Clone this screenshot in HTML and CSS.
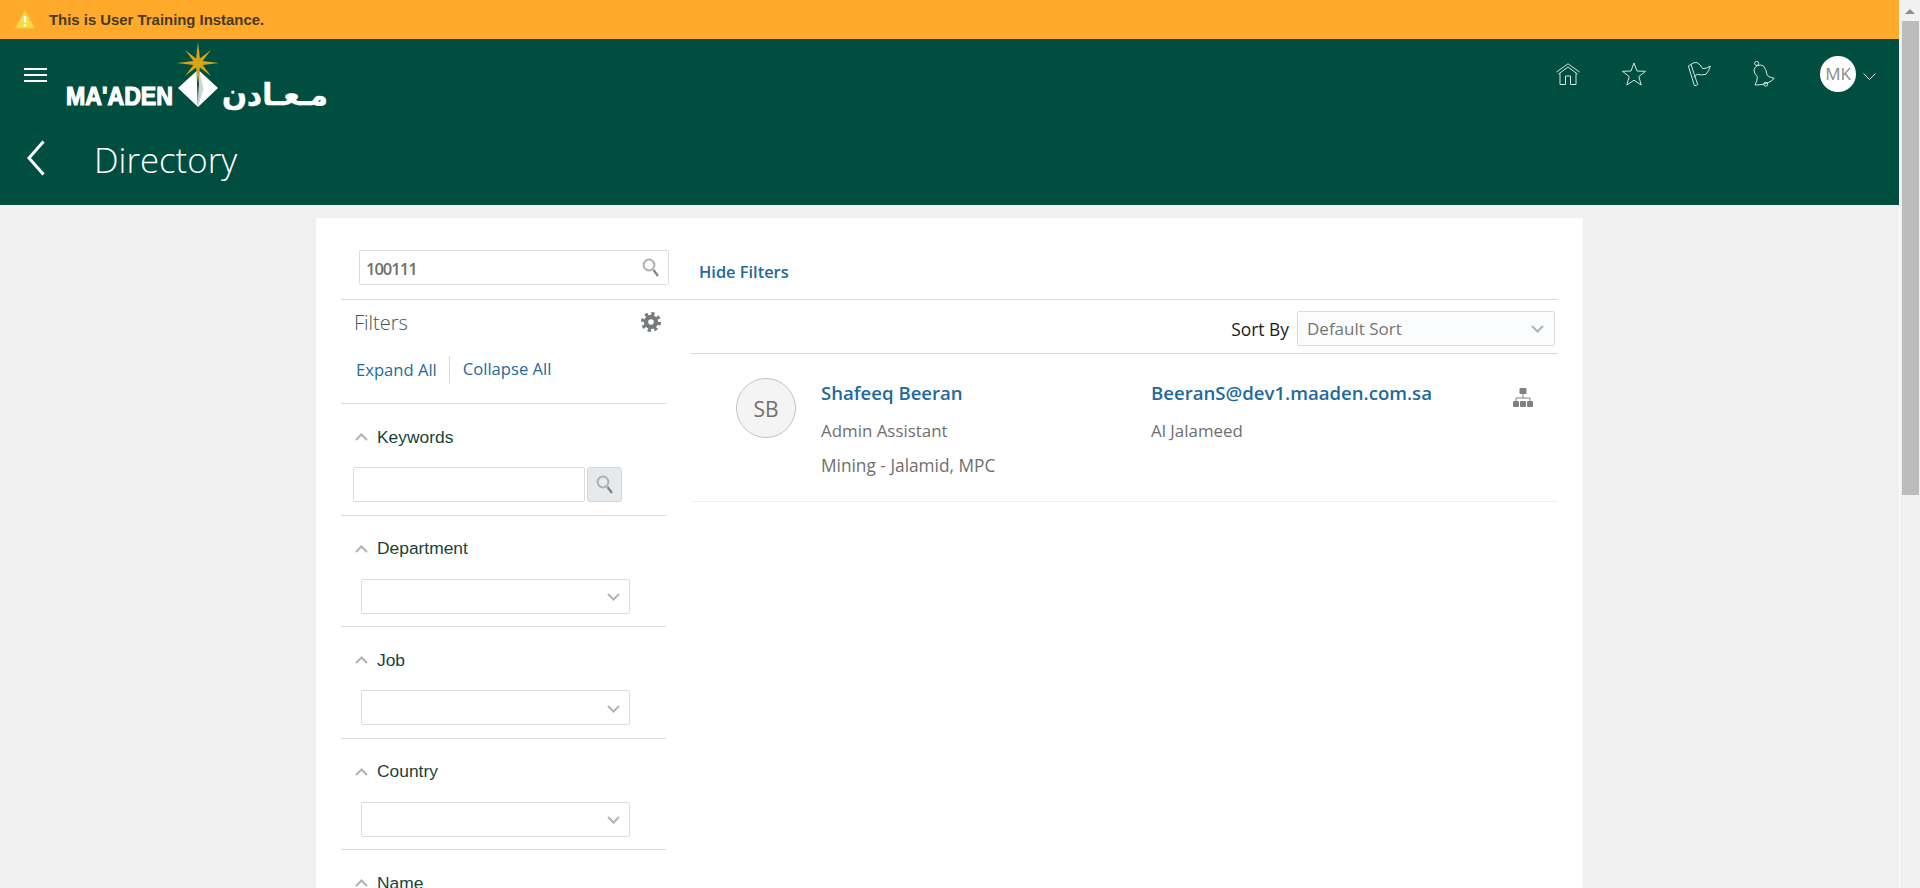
FILE: index.html
```html
<!DOCTYPE html>
<html>
<head>
<meta charset="utf-8" />
<title>Directory</title>
<link rel="stylesheet" href="styles.css">
</head>
<body>
<div class="page">
	<div class="main">
		<div class="banner">
			<svg class="warn" width="20" height="19" viewBox="0 0 20 19"><path d="M10 1 L19.5 18 H0.5 Z" fill="#f7dc3c" stroke="#e9c95a" stroke-width="1.2" stroke-linejoin="round"/><path d="M10 6 V12.5" stroke="#fff" stroke-width="2.4"/><circle cx="10" cy="15.2" r="1.3" fill="#fff"/></svg>
			<span>This is User Training Instance.</span>
		</div>
		<div class="header">
			<div class="top_row">
				<a class="menu" href="javascript:;"><i></i><i></i><i></i></a>
				<svg class="logo" width="275" height="70" viewBox="0 0 275 70">
					<polygon fill="#d9a415" points="138,0 139.9,16.4 151,8 142.6,19.1 159,21 142.6,22.9 151,34 139.9,25.6 138,42 136.1,25.6 125,34 133.4,22.9 117,21 133.4,19.1 125,8 136.1,16.4"/>
					<polygon fill="#fff" points="118,46 136.6,29 137.6,60 138,65"/>
					<polygon fill="#fff" points="139.6,29 158,46 138,65"/>
					<polygon fill="#c9d6d1" points="139.6,29 143.5,47 138,65"/>
					<text class="logo_en" x="6" y="63" textLength="107" lengthAdjust="spacingAndGlyphs">MA'ADEN</text>
					<text class="logo_ar" x="162" y="63" textLength="106" lengthAdjust="spacingAndGlyphs">مـعـادن</text>
				</svg>
				<div class="tools">
					<svg width="24" height="22" viewBox="0 0 24 22"><path d="M0.5 9 L12 0.8 L23.5 9 M2.5 11 L12 4 L21.5 11 M4 10.5 V21.5 H9.5 V13 H14.5 V21.5 H20 V10.5"/></svg>
					<svg width="24" height="24" viewBox="0 0 24 24"><path d="M12 1 L15 9 L23.5 9.3 L16.8 14.6 L19.2 23 L12 18.2 L4.8 23 L7.2 14.6 L0.5 9.3 L9 9 Z"/></svg>
					<svg width="23" height="24" viewBox="0 0 23 24"><path d="M0.4 4 L3 2.4 L9.7 22.6 Q8.4 24 6.3 23.4 Z M3 2.4 Q6 -0.2 9 0.6 Q12 2 14.7 6.6 Q18 7 22.3 4 Q21 9 18 12.3 Q13 13.6 9.7 12.3 Q7.5 12.6 6 15.4"/></svg>
					<svg width="22" height="26" viewBox="0 0 22 26"><circle cx="3.7" cy="2.4" r="2"/><path d="M4.3 4.6 Q8 3.4 10.3 4.8 Q13 7.5 14.3 14.5 Q16.5 16.5 21.3 17.3 Q18.5 20.5 13.7 22.3 Q8 24.2 2 24 Q4.5 20 4.3 15.7 Q0.8 12 1 9 Q1.5 6 4.3 4.6 Z"/><circle cx="12.7" cy="23.2" r="2"/></svg>
					<div class="user">MK</div>
					<svg class="user_arrow" width="13" height="7" viewBox="0 0 13 7"><path d="M0.5 0.5 L6.5 6.5 L12.5 0.5"/></svg>
				</div>
			</div>
			<div class="title_row">
				<svg class="back" width="18" height="36" viewBox="0 0 18 36"><path d="M16.5 1.5 L2 18 L16.5 34.5"/></svg>
				<h1>Directory</h1>
			</div>
		</div>
		<div class="content">
			<div class="card">
				<div class="search_row">
					<div class="search_box">
						<input type="text" value="100111" />
						<svg class="lens" width="18" height="19" viewBox="0 0 18 19"><circle cx="7" cy="7" r="5.4" fill="none" stroke="#b0b0b0" stroke-width="2"/><path d="M11.5 12 L16 18" stroke="#858585" stroke-width="2.4"/></svg>
					</div>
					<a class="hide_link" href="javascript:;">Hide Filters</a>
				</div>
				<div class="card_body">
					<div class="filters">
						<div class="filters_head">
							<h2>Filters</h2>
							<svg width="20" height="20" viewBox="0 0 20 20"><circle cx="10" cy="10" r="5" fill="none" stroke="#777b7e" stroke-width="4.4"/><circle cx="10" cy="10" r="8.3" fill="none" stroke="#777b7e" stroke-width="3.4" stroke-dasharray="3.2 3.32"/></svg>
						</div>
						<div class="expand_row">
							<a href="javascript:;">Expand All</a>
							<a class="collapse" href="javascript:;">Collapse All</a>
						</div>
						<div class="section">
							<div class="sec_head"><svg width="13" height="8" viewBox="0 0 13 8"><path d="M1 7 L6.5 1.5 L12 7"/></svg>Keywords</div>
							<div class="keyword_row">
								<input type="text" />
								<a class="go_btn" href="javascript:;"><svg class="lens" width="18" height="19" viewBox="0 0 18 19"><circle cx="7" cy="7" r="5.4" fill="none" stroke="#b0b0b0" stroke-width="2"/><path d="M11.5 12 L16 18" stroke="#858585" stroke-width="2.4"/></svg></a>
							</div>
						</div>
						<div class="section">
							<div class="sec_head"><svg width="13" height="8" viewBox="0 0 13 8"><path d="M1 7 L6.5 1.5 L12 7"/></svg>Department</div>
							<div class="pick"><svg width="13" height="8" viewBox="0 0 13 8"><path d="M1 1 L6.5 6.5 L12 1"/></svg></div>
						</div>
						<div class="section">
							<div class="sec_head"><svg width="13" height="8" viewBox="0 0 13 8"><path d="M1 7 L6.5 1.5 L12 7"/></svg>Job</div>
							<div class="pick"><svg width="13" height="8" viewBox="0 0 13 8"><path d="M1 1 L6.5 6.5 L12 1"/></svg></div>
						</div>
						<div class="section">
							<div class="sec_head"><svg width="13" height="8" viewBox="0 0 13 8"><path d="M1 7 L6.5 1.5 L12 7"/></svg>Country</div>
							<div class="pick"><svg width="13" height="8" viewBox="0 0 13 8"><path d="M1 1 L6.5 6.5 L12 1"/></svg></div>
						</div>
						<div class="section">
							<div class="sec_head"><svg width="13" height="8" viewBox="0 0 13 8"><path d="M1 7 L6.5 1.5 L12 7"/></svg>Name</div>
						</div>
					</div>
					<div class="results">
						<div class="sort_row">
							<span>Sort By</span>
							<div class="sort_pick">Default Sort<svg width="13" height="8" viewBox="0 0 13 8"><path d="M1 1 L6.5 6.5 L12 1"/></svg></div>
						</div>
						<div class="person">
							<div class="initials">SB</div>
							<div class="col_name">
								<a class="big_link" href="javascript:;">Shafeeq Beeran</a>
								<p class="line1">Admin Assistant</p>
								<p class="line2">Mining - Jalamid, MPC</p>
							</div>
							<div class="col_mail">
								<a class="big_link" href="javascript:;">BeeranS@dev1.maaden.com.sa</a>
								<p class="line1">Al Jalameed</p>
							</div>
							<svg class="org" width="20" height="19" viewBox="0 0 20 19"><rect x="6.5" y="0" width="7" height="6" rx="1"/><path d="M10 6 V10 M3 13 V10 H17 V13" fill="none" stroke="#7d8184" stroke-width="1"/><rect x="0" y="13" width="6" height="6" rx="1"/><rect x="7" y="13" width="6" height="6" rx="1"/><rect x="14" y="13" width="6" height="6" rx="1"/></svg>
						</div>
					</div>
				</div>
			</div>
		</div>
	</div>
	<div class="scrollbar">
		<div class="scroll_up"></div>
		<div class="scroll_thumb"></div>
	</div>
</div>
</body>
</html>
```

FILE: styles.css
```css
*{margin:0;padding:0;box-sizing:border-box;}
html,body{height:100%;overflow:hidden;}
body{font-family:"Open Sans","Noto Sans",sans-serif;color:#6f6f6f;background:#f0f0f0;}
a{text-decoration:none;color:#1f6a9c;}
input{font-family:inherit;outline:none;}
svg{display:block;flex:none;}

.page{display:flex;height:888px;overflow:hidden;}
.main{width:1899px;height:888px;overflow:hidden;flex:none;}

.scrollbar{width:21px;background:#f1f1f1;border-left:1px solid #fafafa;padding:9px 1px 0 1px;}
.scroll_up{width:0;height:0;margin:0 auto;border:5px solid transparent;border-top:0;border-bottom:5px solid #8f8f8f;}
.scroll_thumb{width:17px;height:474px;margin:7px auto 0;background:#bcbcbc;}

.banner{height:39px;background:#ffaa2b;display:flex;align-items:center;padding-left:15px;gap:14px;font:bold 14.9px "Liberation Sans",Arial,sans-serif;color:#46391f;}

.header{height:166px;background:#004e40;padding-top:3px;}
.top_row{display:flex;height:70px;}
.menu{display:block;width:23px;margin:26px 13px 0 24px;}
.menu i{display:block;height:2px;background:#fff;margin-bottom:4px;}
.logo_en{font:bold 26px "Liberation Sans",Arial,sans-serif;fill:#fff;stroke:#fff;stroke-width:1.2;}
.logo_ar{font:bold 30px "DejaVu Sans",sans-serif;fill:#fff;stroke:#fff;stroke-width:.5;}
.tools{margin:14px 23px 0 auto;height:36px;display:flex;align-items:center;gap:42px;}
.tools svg{overflow:visible;}
.tools svg path,.tools svg circle{fill:none;stroke:#d4e8e2;stroke-width:1;stroke-linejoin:round;}
.user{width:36px;height:36px;border-radius:50%;background:#fff;color:#8a8a8a;font-size:17px;line-height:36px;text-align:center;margin-left:3px;}
.tools .user_arrow{margin:4px 0 0 -35px;}
.title_row{display:flex;align-items:center;height:44px;margin-top:24px;padding-left:27px;}
.back path{fill:none;stroke:#fff;stroke-width:3;}
.title_row h1{font-weight:300;font-size:34.8px;color:#fff;margin-left:49px;padding-top:2px;}

.content{display:flex;justify-content:flex-start;padding:13px 0 0 316px;}
.card{width:1267px;height:700px;background:#fff;padding:32px 25px 0;}

.search_row{display:flex;align-items:center;padding:0 0 14px 18px;border-bottom:1px solid #d8dcdf;box-sizing:content-box;height:35px;}
.search_box{position:relative;width:310px;height:35px;}
.search_box input{width:100%;height:100%;border:1px solid #d9dde0;border-radius:2px;padding:2px 30px 0 6px;font-size:16.5px;font-weight:600;letter-spacing:-1px;color:#6f6f6f;}
.search_box .lens{position:absolute;right:9px;top:8px;}
.hide_link{margin-left:30px;padding-top:7px;font-size:16.4px;font-weight:600;}

.card_body{display:flex;gap:25px;}
.filters{width:325px;flex:none;}
.filters_head{display:flex;align-items:center;justify-content:space-between;height:44px;padding:0 5px 0 13px;}
.filters_head h2{font-weight:300;font-size:20px;color:#3d5852;}
.expand_row{display:flex;align-items:center;height:28px;margin:12px 0 19px;padding-left:15px;font-size:16.6px;line-height:26px;}
.collapse{margin-left:12px;padding-left:13px;border-left:1px solid #d8dcdf;height:28px;}

.section{height:111.5px;border-top:1px solid #d8dcdf;padding-top:23px;}
.sec_head{display:flex;align-items:center;height:20px;margin-bottom:20px;padding-left:14px;gap:9px;font:17.4px "Liberation Sans",Arial,sans-serif;color:#17443a;}
.sec_head path,.pick path,.sort_pick path{fill:none;stroke:#b0b4b7;stroke-width:2.1;}
.keyword_row{display:flex;gap:2px;padding-left:12px;}
.keyword_row input{width:232px;height:35px;border:1px solid #d9dde0;border-radius:2px;}
.go_btn{width:35px;height:35px;border:1px solid #d3d7da;border-radius:3px;background:#e6eaec;display:flex;align-items:center;justify-content:center;}
.pick{width:269px;height:35px;margin-left:20px;border:1px solid #d9dde0;border-radius:2px;display:flex;align-items:center;justify-content:flex-end;padding:2px 9px 0 0;}

.results{flex:1;}
.sort_row{display:flex;align-items:center;justify-content:flex-end;height:54px;padding:4px 3px 0 0;gap:8px;font-size:17.4px;color:#1b1b1b;border-bottom:1px solid #d8dcdf;}
.sort_pick{width:258px;height:35px;border:1px solid #d9dde0;border-radius:2px;background:#fbfcfd;color:#757575;font-size:17px;font-weight:500;display:flex;align-items:center;justify-content:space-between;padding:0 10px 0 9px;}
.person{display:flex;align-items:flex-start;height:148px;padding:24px 0 0 45px;border-bottom:1px solid #eceef0;}
.initials{width:60px;height:60px;border-radius:50%;border:1px solid #c4c4c4;background:#f4f4f4;color:#707070;font-size:21px;line-height:60px;text-align:center;flex:none;}
.col_name{width:330px;margin-left:25px;}
.col_mail{width:362px;}
.big_link{display:block;height:30px;line-height:30px;font-size:18.6px;font-weight:600;white-space:nowrap;}
.col_name p,.col_mail p{font-size:16.9px;line-height:30px;}
.col_name .line1,.col_mail .line1{margin-top:8px;}
.col_name .line2{margin-top:5px;font-size:17.3px;}
.org{margin-top:10px;fill:#7d8184;}
```
